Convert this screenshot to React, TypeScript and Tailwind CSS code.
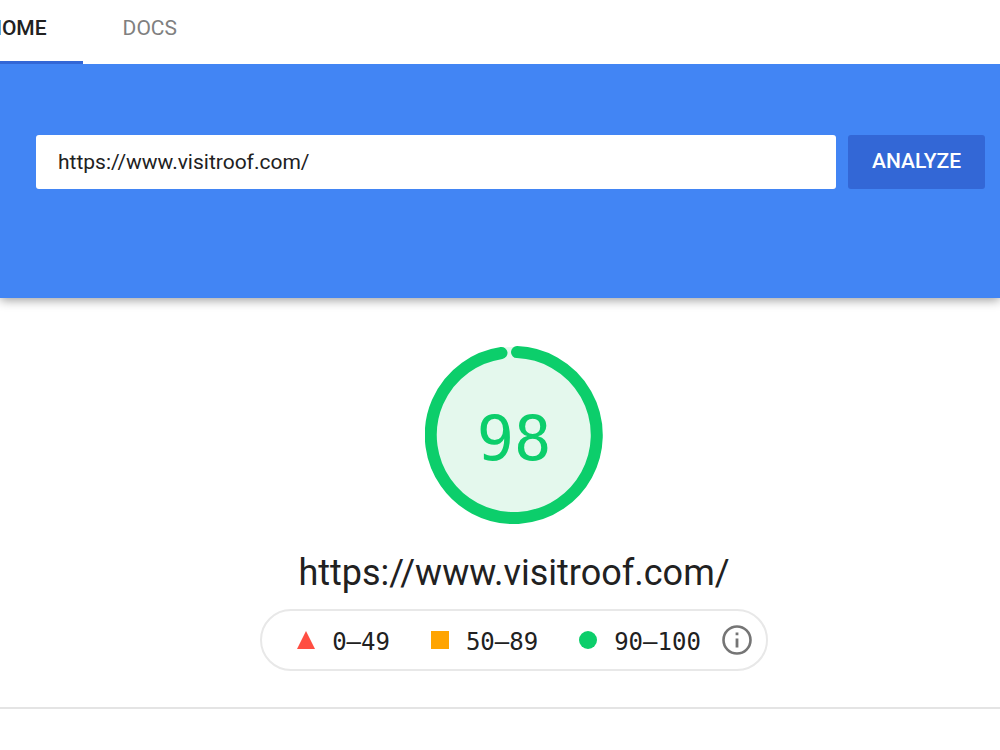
import { useState } from "react";

const ranges = [
  { label: "0–49", shape: "triangle" },
  { label: "50–89", shape: "square" },
  { label: "90–100", shape: "circle" },
];

function Marker({ shape }: { shape: string }) {
  return (
    <svg className="size-[18px]" viewBox="0 0 18 18" aria-hidden="true">
      {shape === "triangle" && <path d="M9 0L18 18H0z" fill="#ff4e42" />}
      {shape === "square" && <path d="M0 0h18v18H0z" fill="#ffa400" />}
      {shape === "circle" && <circle cx="9" cy="9" r="9" fill="#0cce6b" />}
    </svg>
  );
}

function Gauge({ score }: { score: number }) {
  return (
    <div className="grid size-[178px] place-items-center">
      <svg className="col-start-1 row-start-1 size-full" viewBox="0 0 178 178" aria-hidden="true">
        <circle cx="89" cy="89" r="88" fill="#e4f8ed" />
        <path
          d="M92 6.1A83 83 0 1 1 76.500 6.950"
          fill="none"
          stroke="#0cce6b"
          strokeWidth="12"
          strokeLinecap="round"
        />
      </svg>
      <span className="col-start-1 row-start-1 pt-2 font-['DejaVu_Sans_Mono',monospace] text-[62px] leading-none text-[#0cce6b]">
        {score}
      </span>
    </div>
  );
}

export default function App() {
  const [url, setUrl] = useState("https://www.visitroof.com/");
  return (
    <div className="min-h-screen overflow-x-hidden bg-white font-[Roboto,sans-serif] text-[#212121]">
      <nav className="relative z-10 -ml-[49px] flex h-16 bg-white text-[21px] leading-7">
        <a href="#home" className="border-b-3 border-[#3367d6] px-9 pt-[14px] font-medium">
          HOME
        </a>
        <a href="#docs" className="px-10 pt-[14px] text-[#808080]">
          DOCS
        </a>
      </nav>
      <header className="relative bg-[#4285f4] pt-[71px] pr-[15px] pb-[109px] pl-9 shadow-[0_2px_10px_rgba(0,0,0,0.4)]">
        <form className="flex gap-3" onSubmit={(e) => e.preventDefault()}>
          <input
            type="url"
            aria-label="Web page URL"
            value={url}
            onChange={(e) => setUrl(e.target.value)}
            className="h-[54px] min-w-0 flex-1 rounded-[3px] bg-white px-[22px] text-[21px] outline-none"
          />
          <button type="submit" className="h-[54px] rounded-[3px] bg-[#3367d6] px-6 text-[21px] font-medium text-white">
            ANALYZE
          </button>
        </form>
      </header>
      <main className="flex flex-col items-center border-b-2 border-[#e4e4e4] pt-12 pb-9 pl-7">
        <Gauge score={98} />
        <h1 className="mt-7 text-[36px] leading-[42px]">{url}</h1>
        <div className="mt-[15px] flex h-[62px] items-center rounded-full border-2 border-[#e8e8e8] pr-[14px] pl-[35px]">
          <ul className="flex items-center gap-[41px] font-['DejaVu_Sans_Mono',monospace] text-[24px]">
            {ranges.map((r) => (
              <li key={r.label} className="flex items-center gap-[17px]">
                <Marker shape={r.shape} />
                <span className="pt-1">{r.label}</span>
              </li>
            ))}
          </ul>
          <button type="button" aria-label="About the score" className="ml-[21px]">
            <svg className="size-[30px]" viewBox="0 0 30 30" fill="none">
              <circle cx="15" cy="15" r="13.500" stroke="#757575" strokeWidth="2.600" />
              <path d="M13.600 7.500h2.800v2.800h-2.800zM13.600 13.500h2.800v9h-2.800z" fill="#757575" />
            </svg>
          </button>
        </div>
      </main>
    </div>
  );
}
